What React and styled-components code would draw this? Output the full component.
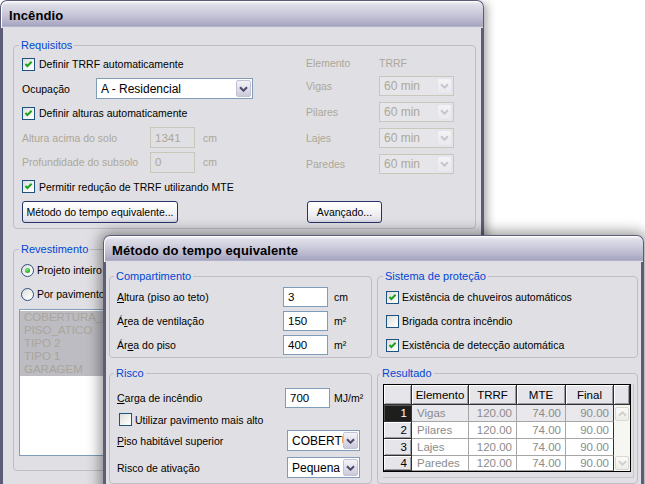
import React from 'react'
import styled, { createGlobalStyle } from 'styled-components'

const FACE = '#e0dfe3'
const GRAY_TEXT = '#aca899'
const BLUE = '#0046d5'
const FIELD_BORDER = '#7f9db9'
const FONT = '"Liberation Sans", Arial, sans-serif'

const GlobalStyle = createGlobalStyle`
    html, body {
        margin: 0;
        padding: 0;
        background: #fff;
        overflow: hidden;
    }
    body {
        font-family: ${FONT};
        font-size: 10.5px;
        color: #000;
    }
`

const Desktop = styled.div`
    position: relative;
    width: 645px;
    height: 484px;
    overflow: hidden;
    background: #fff;
`

const Window = styled.div`
    position: absolute;
    left: ${p => p.$left}px;
    top: ${p => p.$top}px;
    width: ${p => p.$width}px;
    height: ${p => p.$height}px;
    display: flex;
    flex-direction: column;
    border-radius: 7px 7px 0 0;
    box-shadow: ${p => p.$shadow};
`

const TitleBar = styled.div`
    height: ${p => p.$h}px;
    flex: none;
    box-sizing: border-box;
    display: flex;
    align-items: center;
    padding: 2px 0 0 8px;
    border: 1px solid #5d5c78;
    border-bottom: none;
    border-radius: 7px 7px 0 0;
    background: linear-gradient(180deg, #f6f6f9 0%, #dedee8 14%, #cacadb 45%, #b5b4cb 75%, #a5a4be 93%, #f2f2f6 100%);
    box-shadow: inset 1px 1px 0 #fff;
`

const Title = styled.span`
    font: bold 13px ${FONT};
    letter-spacing: 0.1px;
    color: #000;
`

const Client = styled.div`
    flex: 1;
    display: flex;
    flex-direction: column;
    background: ${FACE};
    border-left: 3px solid #5e5d79;
    border-right: 3px solid #5e5d79;
    padding: ${p => p.$pad};
    min-height: 0;
`

const Group = styled.fieldset`
    margin: ${p => p.$mt || 0}px 0 0 0;
    padding: ${p => p.$pad};
    border: 1px solid #bfbec6;
    border-radius: 4px;
    min-width: 0;
`

const Legend = styled.legend`
    padding: 0 2px;
    margin-left: -3px;
    color: ${BLUE};
    font-size: 11px;
    line-height: 13px;
`

const Stack = styled.div`
    display: grid;
    grid-template-rows: ${p => p.$rows};
    align-content: start;
`

const Row = styled.div`
    display: flex;
    align-items: center;
    height: ${p => (p.$h ? `${p.$h}px` : 'auto')};
    white-space: nowrap;
`

const Text = styled.span`
    flex: none;
    width: ${p => (p.$w ? `${p.$w}px` : 'auto')};
    margin-left: ${p => p.$ml || 0}px;
    color: ${p => (p.$disabled ? GRAY_TEXT : '#000')};
`

const Box = styled.span`
    flex: none;
    width: 13px;
    height: 13px;
    box-sizing: border-box;
    margin-left: ${p => p.$ml || 0}px;
    border: 1px solid #1c5180;
    background: linear-gradient(135deg, #dcdcd7 0%, #f4f4f2 60%, #ffffff 100%);
    display: flex;
    align-items: center;
    justify-content: center;
`

const RadioCircle = styled(Box)`
    border-radius: 50%;
    border-color: #2f4f82;
`

const RadioDot = styled.span`
    width: 5px;
    height: 5px;
    border-radius: 50%;
    background: radial-gradient(circle at 40% 35%, #8fe98b 0%, #2fb82b 55%, #1e8e1b 100%);
`

const TextBox = styled.div`
    flex: none;
    box-sizing: border-box;
    width: ${p => p.$w}px;
    height: ${p => p.$h || 21}px;
    margin-left: ${p => p.$ml || 0}px;
    padding-left: 4px;
    display: flex;
    align-items: center;
    border: 1px solid ${p => (p.$disabled ? '#c9c7ba' : FIELD_BORDER)};
    background: ${p => (p.$disabled ? FACE : '#fff')};
    color: ${p => (p.$disabled ? GRAY_TEXT : '#000')};
    font-size: 11.5px;
`

const ComboBox = styled.div`
    flex: none;
    box-sizing: border-box;
    width: ${p => p.$w}px;
    height: ${p => p.$h || 21}px;
    margin-left: ${p => p.$ml || 0}px;
    padding: 1px;
    display: flex;
    border: 1px solid ${p => (p.$disabled ? '#c9c7ba' : FIELD_BORDER)};
    background: ${p => (p.$disabled ? '#e6e5e9' : '#fff')};
    color: ${p => (p.$disabled ? GRAY_TEXT : '#000')};
`

const ComboText = styled.span`
    flex: 1;
    display: flex;
    align-items: center;
    padding-left: 3px;
    overflow: hidden;
    white-space: nowrap;
    font-size: 12px;
`

const ComboButton = styled.span`
    flex: none;
    width: 15px;
    box-sizing: border-box;
    border: 1px solid ${p => (p.$disabled ? '#e4e3ea' : '#c3c2d4')};
    border-radius: 2px;
    background: ${p => (p.$disabled
        ? 'linear-gradient(180deg, #f4f4f6, #e9e9ee)'
        : 'linear-gradient(180deg, #f3f3f8 0%, #dcdce8 60%, #c9c8da 100%)')};
    display: flex;
    align-items: center;
    justify-content: center;
`

const Button = styled.button`
    flex: none;
    box-sizing: border-box;
    width: ${p => p.$w}px;
    height: 22px;
    margin-left: ${p => p.$ml || 0}px;
    padding: 0;
    border: 1px solid #27346a;
    border-radius: 3px;
    background: linear-gradient(180deg, #ffffff 0%, #f5f5f7 45%, #e6e5ec 85%, #d3d2de 100%);
    font: 10.5px ${FONT};
    white-space: nowrap;
    color: #000;
`

const ButtonRow = styled.div`
    display: flex;
    margin-top: 2px;
`

const ReqColumns = styled.div`
    display: grid;
    grid-template-columns: 284px 1fr;
`

const ListBox = styled.div`
    box-sizing: border-box;
    height: 147px;
    margin: 3px 0 0 -3px;
    border: 1px solid ${FIELD_BORDER};
    background: #fff;
    padding-top: 1px;
`

const ListItem = styled.div`
    height: 13px;
    line-height: 13px;
    padding-left: 4px;
    background: #bdbcc2;
    color: #aaa59a;
    font-size: 11.5px;
    white-space: nowrap;
    overflow: hidden;
`

const DialogGrid = styled.div`
    display: grid;
    grid-template-columns: 263px 261px;
    column-gap: 5px;
    row-gap: 9px;
`

const GridWrap = styled.div`
    box-sizing: border-box;
    width: 251px;
    height: 94px;
    border-right: 1px solid #c6c5cc;
    border-bottom: 1px solid #c6c5cc;
`

const ResultGrid = styled.div`
    box-sizing: border-box;
    display: grid;
    grid-template-columns: 28px 57px 48px 49px 48px 16px;
    grid-template-rows: 20px 17px 17px 17px 15px;
    width: 248px;
    height: 88px;
    border: 1px solid #000;
    overflow: hidden;
    background: #fff;
`

const HeadCell = styled.div`
    box-sizing: border-box;
    display: flex;
    align-items: center;
    justify-content: ${p => (p.$right ? 'flex-end' : 'center')};
    padding-right: ${p => (p.$right ? 4 : 0)}px;
    background: ${p => (p.$active ? '#1e1e1c' : '#e6e5ea')};
    color: ${p => (p.$active ? '#fff' : '#000')};
    border-right: 1px solid #303030;
    border-bottom: 1px solid #303030;
    box-shadow: ${p => (p.$active ? 'inset 1px 1px 0 #555' : 'inset 1px 1px 0 #fff, inset -1px -1px 0 #9d9ca4')};
    font-size: 11.5px;
`

const DataCell = styled.div`
    box-sizing: border-box;
    display: flex;
    align-items: center;
    justify-content: ${p => (p.$left ? 'flex-start' : 'flex-end')};
    padding: ${p => (p.$left ? '0 0 0 5px' : '0 4px 0 0')};
    background: ${p => (p.$selected ? '#e9e8ec' : '#fff')};
    color: #8c8c8c;
    border-right: 1px solid ${p => (p.$edge ? '#303030' : '#a6a6a6')};
    border-bottom: 1px solid #a6a6a6;
    font-size: 11.5px;
    white-space: nowrap;
`

const ScrollTrack = styled.div`
    grid-column: 6;
    grid-row: 2 / span 4;
    display: flex;
    flex-direction: column;
    justify-content: space-between;
    align-items: center;
    padding: 2px 0 1px;
    background: #f6f6f3;
`

const ScrollArrow = styled.span`
    box-sizing: border-box;
    width: 14px;
    height: 14px;
    border: 1px solid #d8d8d4;
    border-radius: 2px;
    background: linear-gradient(180deg, #fbfbfa, #ecece8);
    display: flex;
    align-items: center;
    justify-content: center;
`

function Chevron({ color, up }) {
    return (
        <svg width="9" height="6" viewBox="0 0 9 6" style={up ? { transform: 'rotate(180deg)' } : undefined}>
            <path d="M1 1.2 L4.5 4.7 L8 1.2" fill="none" stroke={color} strokeWidth="2" />
        </svg>
    )
}

function CheckBox({ checked, ml }) {
    return (
        <Box $ml={ml}>
            {checked && (
                <svg width="9" height="9" viewBox="0 0 9 9">
                    <path d="M1.4 4 L3.4 6 L7.6 1.8" fill="none" stroke="#21a121" strokeWidth="2" />
                </svg>
            )}
        </Box>
    )
}

function Radio({ checked }) {
    return (
        <RadioCircle $ml={-1}>
            {checked && <RadioDot />}
        </RadioCircle>
    )
}

function Combo({ value, w, h, ml, disabled }) {
    return (
        <ComboBox $w={w} $h={h} $ml={ml} $disabled={disabled}>
            <ComboText>{value}</ComboText>
            <ComboButton $disabled={disabled}>
                <Chevron color={disabled ? '#c6c5d0' : '#4a4968'} />
            </ComboButton>
        </ComboBox>
    )
}

const trrf = ['Vigas', 'Pilares', 'Lajes', 'Paredes']
const floors = ['COBERTURA_ATICO', 'PISO_ATICO', 'TIPO 2', 'TIPO 1', 'GARAGEM']

function Incendio() {
    return (
        <Window $left={0} $top={0} $width={484} $height={520} $shadow="6px 0 10px -3px rgba(0,0,0,0.35)">
            <TitleBar $h={28}>
                <Title>Incêndio</Title>
            </TitleBar>
            <Client $pad="0 5px 0 10px">
                <Group $mt={11} $pad="0 8px 5px 8px">
                    <Legend>Requisitos</Legend>
                    <ReqColumns>
                        <Stack $rows="repeat(6, 24.5px)">
                            <Row><CheckBox checked /><Text $ml={4}>Definir TRRF automaticamente</Text></Row>
                            <Row>
                                <Text $w={74}>Ocupação</Text>
                                <Combo value="A - Residencial" w={157} />
                            </Row>
                            <Row><CheckBox checked /><Text $ml={4}>Definir alturas automaticamente</Text></Row>
                            <Row>
                                <Text $w={128} $disabled>Altura acima do solo</Text>
                                <TextBox $w={45} $disabled>1341</TextBox>
                                <Text $ml={8} $disabled>cm</Text>
                            </Row>
                            <Row>
                                <Text $w={128} $disabled>Profundidade do subsolo</Text>
                                <TextBox $w={45} $disabled>0</TextBox>
                                <Text $ml={8} $disabled>cm</Text>
                            </Row>
                            <Row><CheckBox checked /><Text $ml={4}>Permitir redução de TRRF utilizando MTE</Text></Row>
                        </Stack>
                        <Stack $rows="21px repeat(4, 26px)">
                            <Row>
                                <Text $w={73} $disabled>Elemento</Text>
                                <Text $disabled>TRRF</Text>
                            </Row>
                            {trrf.map(name => (
                                <Row key={name}>
                                    <Text $w={73} $disabled>{name}</Text>
                                    <Combo value="60 min" w={75} h={20} disabled />
                                </Row>
                            ))}
                        </Stack>
                        <ButtonRow>
                            <Button $w={156}>Método do tempo equivalente...</Button>
                        </ButtonRow>
                        <ButtonRow>
                            <Button $w={75} $ml={1}>Avançado...</Button>
                        </ButtonRow>
                    </ReqColumns>
                </Group>
                <Group $mt={14} $pad="2px 8px 14px 8px">
                    <Legend>Revestimento</Legend>
                    <Row $h={24}><Radio checked /><Text $ml={3}>Projeto inteiro</Text></Row>
                    <Row $h={24}><Radio /><Text $ml={3}>Por pavimento</Text></Row>
                    <ListBox>
                        {floors.map(f => <ListItem key={f}>{f}</ListItem>)}
                    </ListBox>
                </Group>
            </Client>
        </Window>
    )
}

const results = [
    ['Vigas', '120.00', '74.00', '90.00'],
    ['Pilares', '120.00', '74.00', '90.00'],
    ['Lajes', '120.00', '74.00', '90.00'],
    ['Paredes', '120.00', '74.00', '90.00'],
]

function MetodoTempo() {
    return (
        <Window $left={103} $top={235} $width={541} $height={270} $shadow="0 0 14px 3px rgba(0,0,0,0.42)">
            <TitleBar $h={27}>
                <Title>Método do tempo equivalente</Title>
            </TitleBar>
            <Client $pad="8px 3px 0 3px">
                <DialogGrid>
                    <Group $pad="2px 0 0 7px">
                        <Legend>Compartimento</Legend>
                        <Row $h={24}>
                            <Text $w={166}><u>A</u>ltura (piso ao teto)</Text>
                            <TextBox $w={45} $h={20}>3</TextBox>
                            <Text $ml={6}>cm</Text>
                        </Row>
                        <Row $h={24}>
                            <Text $w={166}>Á<u>r</u>ea de ventilação</Text>
                            <TextBox $w={45} $h={20}>150</TextBox>
                            <Text $ml={6}>m²</Text>
                        </Row>
                        <Row $h={24}>
                            <Text $w={166}>Ár<u>e</u>a do piso</Text>
                            <TextBox $w={45} $h={20}>400</TextBox>
                            <Text $ml={6}>m²</Text>
                        </Row>
                    </Group>
                    <Group $pad="2px 0 0 8px">
                        <Legend>Sistema de proteção</Legend>
                        <Row $h={24}><CheckBox checked /><Text $ml={3}>Existência de chuveiros automáticos</Text></Row>
                        <Row $h={24}><CheckBox /><Text $ml={3}>Brigada contra incêndio</Text></Row>
                        <Row $h={24}><CheckBox checked /><Text $ml={3}>Existência de detecção automática</Text></Row>
                    </Group>
                    <Group $pad="5px 0 0 7px">
                        <Legend>Risco</Legend>
                        <Row $h={26}>
                            <Text $w={168}><u>C</u>arga de incêndio</Text>
                            <TextBox $w={45} $h={20}>700</TextBox>
                            <Text $ml={4}>MJ/m²</Text>
                        </Row>
                        <Row $h={17}><CheckBox ml={2} /><Text $ml={3}>Utilizar pavimento mais alto</Text></Row>
                        <Row $h={25}>
                            <Text $w={168}><u>P</u>iso habitável superior</Text>
                            <Combo value="COBERTURA_ATICO" w={73} ml={2} />
                        </Row>
                        <Row $h={29}>
                            <Text $w={168}>Risco de ativação</Text>
                            <Combo value="Pequena" w={73} ml={2} />
                        </Row>
                    </Group>
                    <Group $pad="4px 0 5px 5px">
                        <Legend>Resultado</Legend>
                        <GridWrap>
                            <ResultGrid>
                                <HeadCell />
                                <HeadCell>Elemento</HeadCell>
                                <HeadCell>TRRF</HeadCell>
                                <HeadCell>MTE</HeadCell>
                                <HeadCell>Final</HeadCell>
                                <HeadCell />
                                {results.map((r, i) => (
                                    <React.Fragment key={r[0]}>
                                        <HeadCell $right $active={i === 0} style={{ gridColumn: 1, gridRow: i + 2 }}>{i + 1}</HeadCell>
                                        <DataCell $left $selected={i === 0} style={{ gridColumn: 2, gridRow: i + 2 }}>{r[0]}</DataCell>
                                        <DataCell $selected={i === 0} style={{ gridColumn: 3, gridRow: i + 2 }}>{r[1]}</DataCell>
                                        <DataCell $selected={i === 0} style={{ gridColumn: 4, gridRow: i + 2 }}>{r[2]}</DataCell>
                                        <DataCell $edge $selected={i === 0} style={{ gridColumn: 5, gridRow: i + 2 }}>{r[3]}</DataCell>
                                    </React.Fragment>
                                ))}
                                <ScrollTrack>
                                    <ScrollArrow><Chevron color="#cfcfcb" up /></ScrollArrow>
                                    <ScrollArrow><Chevron color="#cfcfcb" /></ScrollArrow>
                                </ScrollTrack>
                            </ResultGrid>
                        </GridWrap>
                    </Group>
                </DialogGrid>
            </Client>
        </Window>
    )
}

export default function App() {
    return (
        <>
            <GlobalStyle />
            <Desktop>
                <Incendio />
                <MetodoTempo />
            </Desktop>
        </>
    )
}
